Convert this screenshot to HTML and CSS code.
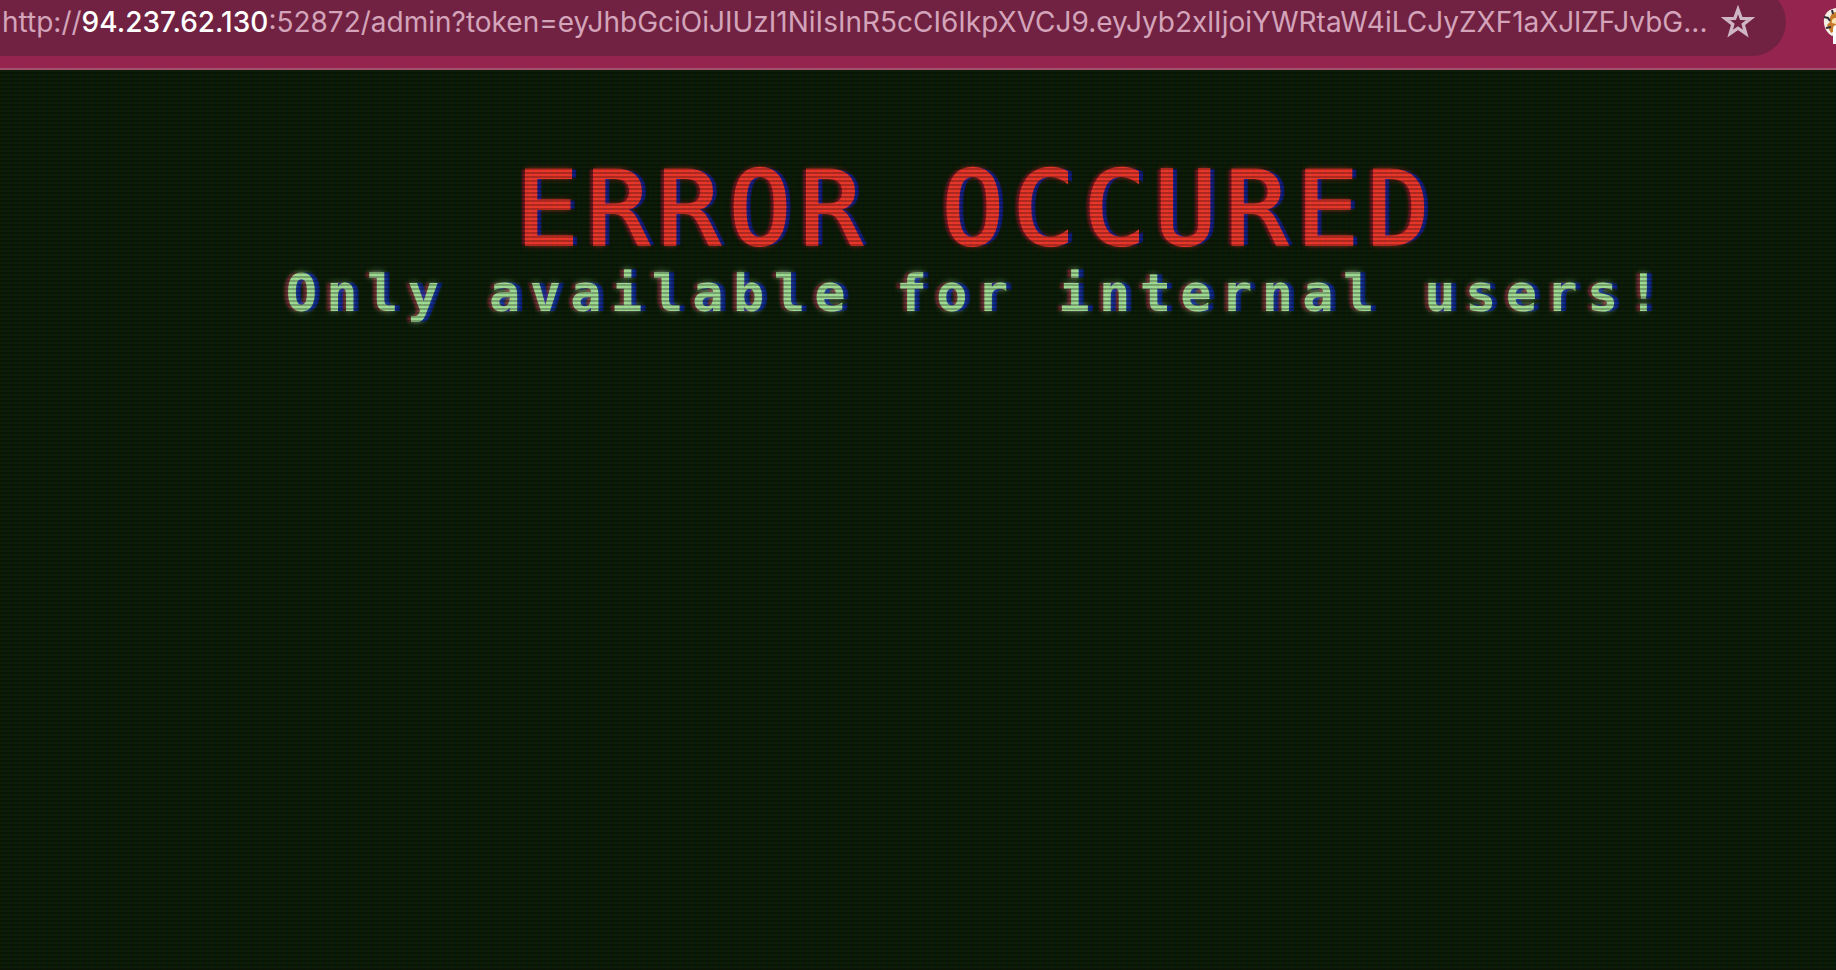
FILE: index.html
```html
<!DOCTYPE html>
<html lang="en">
<head>
<meta charset="utf-8">
<title>Error</title>
<link rel="stylesheet" href="styles.css">
</head>
<body>
<header class="toolbar">
  <div class="omnibox">
    <div class="url"><span>http://</span><span class="host">94.237.62.130</span><span>:52872/admin?token=eyJhbGciOiJIUzI1NiIsInR5cCI6IkpXVCJ9.eyJyb2xlIjoiYWRtaW4iLCJyZXF1aXJlZFJvbG...</span></div>
    <button class="star" type="button" aria-label="Bookmark this page">
      <svg viewBox="0 0 34 34" width="34" height="34"><path d="M17 4.500l3.200 8.800 9.400.3-7.400 5.800 2.600 9.100-7.800-5.300-7.800 5.300 2.600-9.100-7.400-5.800 9.400-.3z" fill="none" stroke="currentColor" stroke-width="3.300"/></svg>
    </button>
  </div>
  <button class="extension" type="button" aria-label="Extension">
    <svg viewBox="0 0 13 44" width="13" height="44">
      <path d="M13 8C7 9 2 12 1 19c-1 8 3 14 8 17l4-2z" fill="#f3ede4"/>
      <path d="M13 12c-5 1-7 5-6 10l-3 3 4 8 5-3z" fill="#c77a2b"/>
      <path d="M13 18c-3 0-5 2-4 5l4 1z" fill="#f7dfae"/>
      <path d="M1 17l4 1 2 3M3 28l5-1M9 10l1 4" fill="none" stroke="#332b36" stroke-width="2"/>
      <rect x="10" y="25" width="12" height="22" rx="4" fill="#fff"/>
    </svg>
  </button>
</header>
<main class="screen">
  <h1 class="title">ERROR OCCURED</h1>
  <h2 class="message">Only available for internal users!</h2>
</main>
</body>
</html>
```
FILE: styles.css
```css
* { box-sizing: border-box; }
html, body { height: 100%; }
body {
  margin: 0;
  display: flex;
  flex-direction: column;
  overflow: hidden;
  background: #0a1b06;
}
button {
  border: 0;
  padding: 0;
  background: none;
  color: inherit;
}
svg { display: block; }

.toolbar {
  flex: none;
  display: flex;
  align-items: center;
  justify-content: space-between;
  height: 70px;
  padding-bottom: 24px;
  background: #95254f;
  border-bottom: 2px solid #a4506f;
  overflow: hidden;
}
.omnibox {
  flex: none;
  display: flex;
  align-items: center;
  width: calc(100% - 50px);
  height: 68px;
  padding: 0 31px 0 2px;
  background: #712242;
  border-radius: 0 34px 34px 0;
  color: #d3a4ba;
}
.url {
  flex: 1;
  min-width: 0;
  overflow: hidden;
  white-space: nowrap;
  font: 28px/40px Inter, "Liberation Sans", sans-serif;
}
.host {
  color: #fff;
  font-weight: 500;
}
.star { color: #cfb6c4; }

.screen {
  position: relative;
  flex: 1;
  padding: 83px 0 0 118px;
  text-align: center;
  font-family: "DejaVu Sans Mono", "Liberation Mono", monospace;
}
/* CRT scanlines and colour fringing */
.screen::after {
  content: "";
  position: absolute;
  inset: 0;
  pointer-events: none;
  background:
    linear-gradient(rgba(18, 16, 16, 0) 50%, rgba(0, 0, 0, 0.25) 50%) 0 0 / 100% 4px,
    linear-gradient(90deg, rgba(255, 0, 0, 0.04), rgba(0, 255, 0, 0.02), rgba(0, 0, 255, 0.04)) 0 0 / 6px 100%;
}
.title {
  margin: 0;
  font-size: 104px;
  font-weight: 400;
  line-height: 112px;
  letter-spacing: 0.08em;
  color: #ea3528;
  -webkit-text-stroke: 2px #ea3528;
  text-shadow: 5px 0 1px rgba(0, 30, 255, 0.5), -4px 0 2px rgba(255, 0, 80, 0.3), 0 0 6px rgba(238, 53, 40, 0.7);
}
.message {
  margin: 0;
  font-size: 52px;
  font-weight: 700;
  line-height: 56px;
  letter-spacing: 0.18em;
  color: #a0dc93;
  text-shadow: 5px 0 1px rgba(0, 30, 255, 0.5), -4px 0 2px rgba(255, 0, 80, 0.3), 0 0 6px rgba(157, 220, 147, 0.7);
}
```
